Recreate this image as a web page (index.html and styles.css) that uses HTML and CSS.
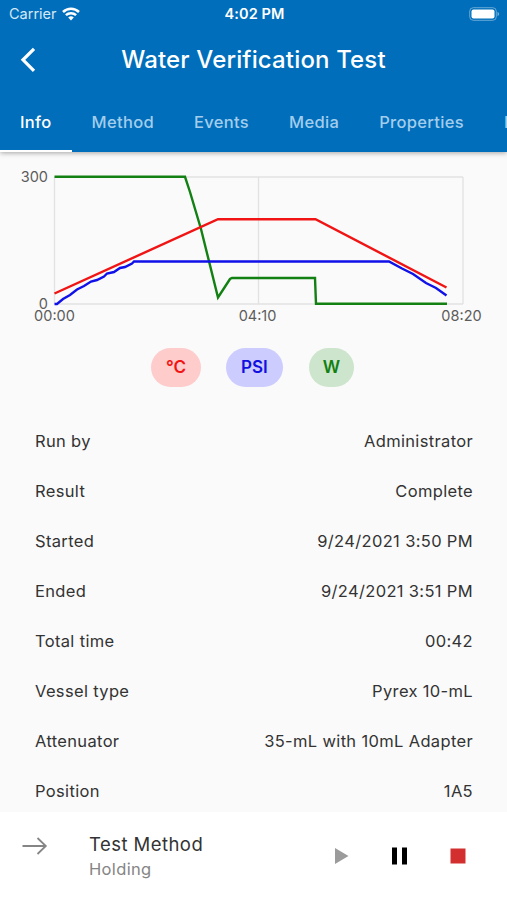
FILE: index.html
```html
<!DOCTYPE html>
<html lang="en">
<head>
    <meta charset="UTF-8">
    <meta name="viewport" content="width=device-width, initial-scale=1.0">
    <title>Water Verification Test</title>
    <link rel="stylesheet" href="styles.css">
</head>
<body>
    <header class="app-bar">
        <div class="status-bar">
            <div class="carrier">
                <span>Carrier</span>
                <svg width="18" height="14" viewBox="0 0 18 14" fill="none" stroke="#fff" stroke-width="2.5">
                    <path d="M1 5 A11.6 11.6 0 0 1 17 5" />
                    <path d="M3.9 8.2 A7.4 7.4 0 0 1 14.1 8.2" />
                    <path d="M9 13.4 L6.2 10.6 A4 4 0 0 1 11.8 10.6 Z" fill="#fff" stroke="none" />
                </svg>
            </div>
            <div class="clock">4:02 PM</div>
            <div class="battery">
                <svg width="31" height="14" viewBox="0 0 31 14">
                    <rect x="0.7" y="0.7" width="26.6" height="12.6" rx="3.6" fill="none" stroke="#fff" stroke-opacity="0.4" stroke-width="1" />
                    <rect x="2.5" y="2.5" width="23" height="9" rx="2" fill="#fff" />
                    <path d="M28.5 4.8 Q30.2 5.5 30.2 7 Q30.2 8.5 28.5 9.2 Z" fill="#fff" fill-opacity="0.45" />
                </svg>
            </div>
        </div>
        <div class="title-bar">
            <svg class="back" width="16" height="26" viewBox="0 0 16 26" fill="none" stroke="#fff" stroke-width="3.2">
                <path d="M14 1.8 L3 12.8 L14 23.8" />
            </svg>
            <h1>Water Verification Test</h1>
        </div>
        <nav class="tabs">
            <a class="tab active">Info</a>
            <a class="tab">Method</a>
            <a class="tab">Events</a>
            <a class="tab">Media</a>
            <a class="tab">Properties</a>
            <a class="tab">Notes</a>
        </nav>
    </header>

    <main>
        <svg class="chart" width="507" height="176" viewBox="0 152 507 176">
            <g class="grid">
                <path d="M54.5 177 H463 M54.5 304 H463 M54.5 177 V304 M258.5 177 V304 M463 177 V304" />
            </g>
            <g class="axis">
                <text x="48" y="182" text-anchor="end">300</text>
                <text x="48" y="309" text-anchor="end">0</text>
                <text x="54.5" y="321" text-anchor="middle">00:00</text>
                <text x="257.5" y="321" text-anchor="middle">04:10</text>
                <text x="461.5" y="321" text-anchor="middle">08:20</text>
            </g>
            <g class="series">
                <polyline class="watts" points="54.5,176.8 185,176.8 190,192 201,229 218,297.5 230,279 232,278 315,278 316,303.7 447,303.7" />
                <polyline class="temp" points="54.5,293.5 218,219.2 315.5,219.2 446.5,287.5" />
                <polyline class="pressure" points="54.5,304 57,304 63,299 70,295 77,289.5 84,286 91,281.5 97,280 104,276.5 107,273.5 114,272 120,268 125,267 132,263.5 134,261.5 389,261.5 402,268.5 413,274 426,283 436,288 446.5,295.5" />
            </g>
        </svg>

        <div class="chips">
            <span class="chip chip-temp">°C</span>
            <span class="chip chip-pressure">PSI</span>
            <span class="chip chip-watts">W</span>
        </div>

        <dl class="details">
            <div class="row"><dt>Run by</dt><dd>Administrator</dd></div>
            <div class="row"><dt>Result</dt><dd>Complete</dd></div>
            <div class="row"><dt>Started</dt><dd>9/24/2021 3:50 PM</dd></div>
            <div class="row"><dt>Ended</dt><dd>9/24/2021 3:51 PM</dd></div>
            <div class="row"><dt>Total time</dt><dd>00:42</dd></div>
            <div class="row"><dt>Vessel type</dt><dd>Pyrex 10-mL</dd></div>
            <div class="row"><dt>Attenuator</dt><dd>35-mL with 10mL Adapter</dd></div>
            <div class="row"><dt>Position</dt><dd>1A5</dd></div>
        </dl>
    </main>

    <footer class="player">
        <svg class="arrow" width="26" height="18" viewBox="0 0 26 18" fill="none" stroke="#858585" stroke-width="1.8">
            <path d="M0.5 9 H24 M15.5 1 L23.8 9 L15.5 17" />
        </svg>
        <div class="method">
            <div class="method-name">Test Method</div>
            <div class="method-state">Holding</div>
        </div>
        <div class="controls">
            <svg width="16" height="18" viewBox="0 0 16 18"><path d="M1 1 L14.5 9 L1 17 Z" fill="#9b9b9b" /></svg>
            <svg width="16" height="18" viewBox="0 0 16 18"><path d="M0 0.5 H5 V17.5 H0 Z M10 0.5 H15 V17.5 H10 Z" fill="#000" /></svg>
            <svg width="16" height="18" viewBox="0 0 16 18"><path d="M0.5 1.5 H15.5 V16.5 H0.5 Z" fill="#d32f2f" /></svg>
        </div>
    </footer>
</body>
</html>
```

FILE: styles.css
```css
* {
    box-sizing: border-box;
}
body {
    margin: 0;
    height: 900px;
    display: flex;
    flex-direction: column;
    overflow: hidden;
    background-color: #fafafa;
    color: #333;
    font-family: Inter, "Liberation Sans", sans-serif;
}
.app-bar {
    flex: none;
    height: 152px;
    background-color: #006eba;
    color: #fff;
    box-shadow: 0 1px 5px rgba(0, 0, 0, 0.35);
}
.status-bar {
    display: grid;
    grid-template-columns: 1fr auto 1fr;
    align-items: center;
    height: 27px;
    padding: 0 7px 0 9px;
}
.carrier {
    display: flex;
    align-items: center;
    gap: 5px;
    font-size: 14.5px;
    color: #d5e8f6;
}
.clock {
    font-size: 14.5px;
    font-weight: 600;
    letter-spacing: 0.1px;
}
.battery {
    display: flex;
    justify-content: flex-end;
}
.title-bar {
    display: grid;
    grid-template-columns: 36px 1fr 36px;
    align-items: center;
    height: 65px;
}
.back {
    margin-left: 20px;
}
h1 {
    margin: 0;
    text-align: center;
    font-size: 24px;
    font-weight: 500;
    letter-spacing: 0.15px;
}
.tabs {
    display: flex;
    height: 60px;
    overflow: hidden;
    white-space: nowrap;
}
.tab {
    flex: none;
    padding: 0 20px;
    line-height: 60px;
    font-size: 16.5px;
    font-weight: 500;
    letter-spacing: 0.33px;
    color: #a3cdec;
}
.tab.active {
    color: #fff;
    border-bottom: 2px solid #fff;
}
.chart {
    display: block;
}
.grid path {
    fill: none;
    stroke: #e2e2e2;
    stroke-width: 1.3;
}
.axis text {
    fill: #5c5c5c;
    font-size: 14.5px;
}
.series polyline {
    fill: none;
    stroke-width: 2.4;
}
.series .watts {
    stroke: #128012;
}
.series .temp {
    stroke: #f01414;
}
.series .pressure {
    stroke: #1010e8;
}
.chips {
    display: flex;
    justify-content: center;
    gap: 25px;
    margin-top: 20px;
    padding-right: 2px;
}
.chip {
    height: 39px;
    padding: 0 15px;
    border-radius: 20px;
    line-height: 39px;
    font-size: 17px;
    font-weight: 600;
}
.chip-temp {
    background-color: #ffcccc;
    color: #f01414;
}
.chip-pressure {
    background-color: #ccccff;
    color: #1010e0;
}
.chip-watts {
    padding: 0 14px;
    margin-left: 1px;
    background-color: #cce5cc;
    color: #128012;
}
.details {
    margin: 29px 0 0;
    padding: 0 34px 0 35px;
}
.row {
    display: flex;
    justify-content: space-between;
    height: 50px;
    line-height: 50px;
    font-size: 16.5px;
    letter-spacing: 0.34px;
}
dd {
    margin: 0;
}
main {
    flex: 1;
    min-height: 0;
    overflow: hidden;
}
.player {
    flex: none;
    display: flex;
    height: 88px;
    padding: 0 41px 0 22px;
    background-color: #fff;
}
.arrow {
    margin-top: 25px;
}
.method {
    flex: 1;
    margin: 20px 0 0 41px;
}
.method-name {
    font-size: 18.5px;
    line-height: 25px;
    letter-spacing: 0.45px;
}
.method-state {
    font-size: 16.5px;
    line-height: 25px;
    letter-spacing: 0.35px;
    color: #858585;
}
.controls {
    display: flex;
    gap: 42px;
    margin-top: 35px;
}
```
